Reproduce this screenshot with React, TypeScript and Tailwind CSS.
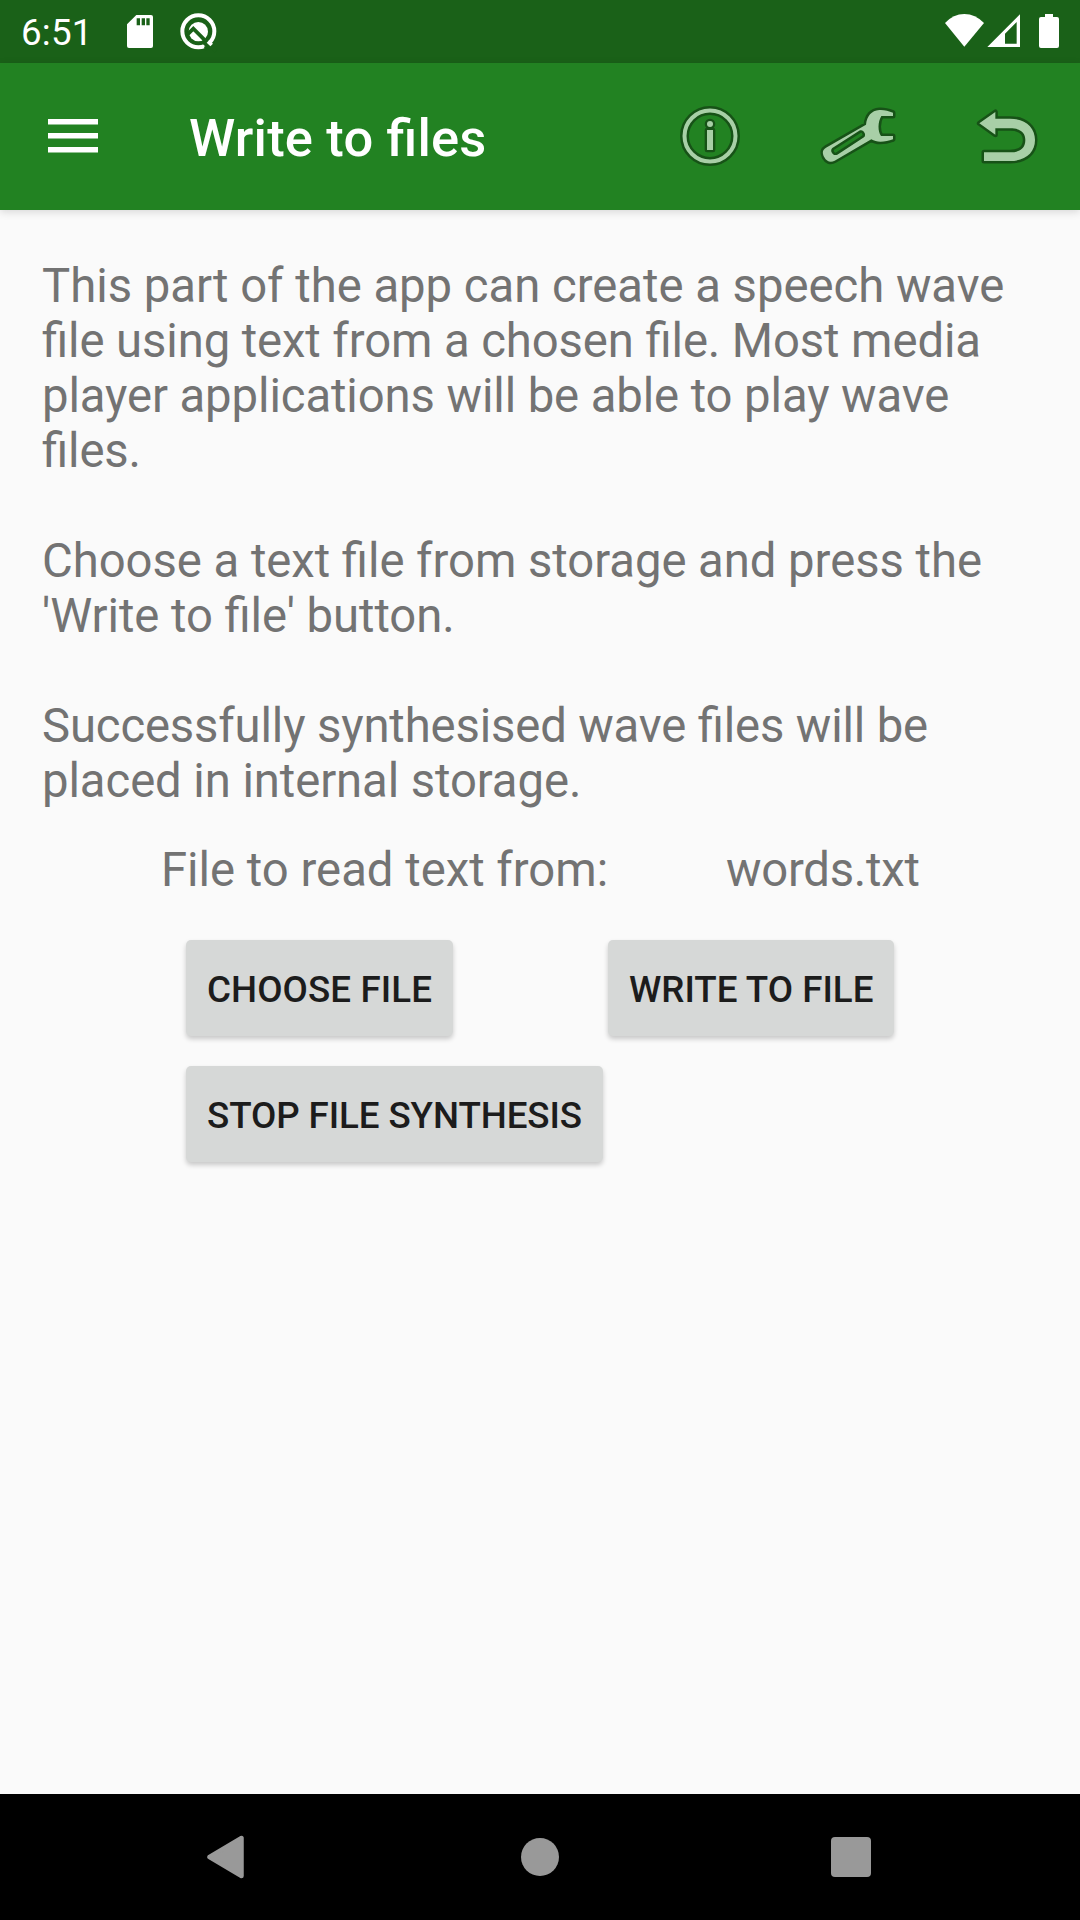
import React from 'react';

function StatusBar() {
  return (
    <div className="flex h-[63px] items-center bg-[#1a6118] text-white">
      <span className="ml-[21px] w-[100px] pt-[2px] text-[36.75px] leading-[63px] tracking-[0.2px]">6:51</span>
      <svg className="h-[63px] w-[120px]" viewBox="363 0 360 189" fill="none">
        <path
          d="M409 45H453Q459 45 459 51V138Q459 144 453 144H387Q381 144 381 138V73Z"
          fill="#fff"
        />
        <path d="M410 55h10v21h-10zM425 55h10v21h-10zM439 55h10v21h-10z" fill="#1a6118" />
        <circle cx="595" cy="94" r="48" stroke="#fff" strokeWidth="12" />
        <circle cx="595" cy="95" r="29" fill="#fff" />
        <path d="M562 104L580 86L648 154" stroke="#1a6118" strokeWidth="11" />
        <path d="M611 128L626 143M616 139L620 150" stroke="#1a6118" strokeWidth="9" />
        <path d="M624 124L635 135" stroke="#fff" strokeWidth="11" />
      </svg>
      <svg className="ml-auto h-[63px] w-[160px]" viewBox="0 0 480 189" fill="#fff">
        <path d="M75 69Q100 42 133 42Q166 42 192 69L133 140Z" />
        <path fillRule="evenodd" d="M202 141L300 43V141ZM255 101V131H290V66Z" />
        <path d="M375 42H399V51H411Q417 51 417 57V138Q417 144 411 144H363Q357 144 357 138V57Q357 51 363 51H375Z" />
      </svg>
    </div>
  );
}

function InfoIcon() {
  return (
    <svg className="h-[93px] w-[130px]" viewBox="0 0 390 279" fill="none">
      <circle cx="150" cy="138" r="76.5" stroke="#175217" strokeWidth="27" />
      <circle cx="150" cy="138" r="76.5" stroke="#a8cfa7" strokeWidth="12" />
      <g fill="#a8cfa7" stroke="#175217" strokeWidth="14" strokeLinejoin="round" paintOrder="stroke">
        <circle cx="150" cy="102" r="9" />
        <path d="M141 120H159V180H141Z" />
      </g>
    </svg>
  );
}

function WrenchIcon() {
  return (
    <svg className="h-[93px] w-[120px]" viewBox="0 0 360 279">
      <path
        fillRule="evenodd"
        fill="#a8cfa7"
        stroke="#175217"
        strokeWidth="15"
        strokeLinejoin="round"
        paintOrder="stroke"
        d="M279 68C266 63 252 59 238 60C214 62 201 78 198 104L78 173C66 180 67 190 73 202C80 215 92 219 104 212L214 148C232 160 258 155 279 148V138H243C233 124 233 96 244 78H279ZM180 121C190 117 201 134 192 142L112 194C101 200 87 184 97 174Z"
      />
    </svg>
  );
}

function BackIcon() {
  return (
    <svg className="h-[93px] w-[120px]" viewBox="0 0 360 279">
      <path
        fill="#a8cfa7"
        stroke="#175217"
        strokeWidth="15"
        strokeLinejoin="round"
        paintOrder="stroke"
        d="M58 100L106 66V86H150C196 86 225 112 225 150C225 188 196 213 150 213H72V187H150C180 187 196 175 196 150C196 126 180 115 150 115H106V134Z"
      />
    </svg>
  );
}

function AppBar() {
  return (
    <header className="relative flex h-[147px] items-center bg-[#228222] shadow-[0_2px_8px_rgba(0,0,0,0.14)]">
      <svg className="mb-[2px] ml-12 h-[34px] w-[50px]" viewBox="0 0 50 34" fill="#fff">
        <path d="M0 0h50v5.4H0zM0 14h50v5.4H0zM0 28h50v5.6H0z" />
      </svg>
      <h1 className="ml-[91px] pt-[2px] text-[52.5px] font-medium leading-[62px] tracking-[0.18px] text-white [font-feature-settings:'liga'_1]">
        Write to files
      </h1>
      <div className="ml-auto flex">
        <InfoIcon />
        <div className="ml-[10px] flex gap-10">
          <WrenchIcon />
          <BackIcon />
        </div>
      </div>
    </header>
  );
}

function Button({ className, children }: { className: string; children: React.ReactNode }) {
  return (
    <button
      className={`h-[96px] rounded-[5px] bg-[#d6d8d7] pl-[21px] pt-[2px] text-left text-[36.75px] font-medium leading-[43px] text-[#1c1c1c] shadow-[0_3px_5px_rgba(0,0,0,0.2)] ${className}`}
    >
      {children}
    </button>
  );
}

export default function App() {
  return (
    <div className="flex h-[1920px] w-[1080px] flex-col overflow-hidden bg-[#fafafa] font-['Roboto',sans-serif]">
      <StatusBar />
      <AppBar />
      <main className="flex-1 pt-[49px] text-[47.25px] leading-[55px] text-[#737373] [font-feature-settings:'liga'_1]">
        <div className="flex flex-col gap-[55px] whitespace-nowrap pl-[42px]">
          <p>
            <span className="tracking-[-0.02px]">This part of the app can create a speech wave</span>
            <br />
            <span className="tracking-[-0.1px]">file using text from a chosen file. Most media</span>
            <br />
            <span className="tracking-[-0.1px]">player applications will be able to play wave</span>
            <br />
            <span className="tracking-[-0.15px]">files.</span>
          </p>
          <p>
            <span className="tracking-[-0.04px]">Choose a text file from storage and press the</span>
            <br />
            <span className="tracking-[-0.06px]">'Write to file' button.</span>
          </p>
          <p>
            <span className="tracking-[-0.15px]">Successfully synthesised wave files will be</span>
            <br />
            <span className="tracking-[-0.08px]">placed in internal storage.</span>
          </p>
        </div>
        <div className="mt-[34px] flex whitespace-nowrap pl-[161px]">
          <span className="w-[565px]">File to read text from:</span>
          <span className="tracking-[-0.25px]">words.txt</span>
        </div>
        <div className="mt-[42px] grid grid-cols-[422px_auto] justify-start justify-items-start gap-y-[30px] whitespace-nowrap pl-[186px]">
          <Button className="w-[267px] tracking-[0.08px]">CHOOSE FILE</Button>
          <Button className="w-[286px]">WRITE TO FILE</Button>
          <Button className="w-[417px] tracking-[-0.1px]">STOP FILE SYNTHESIS</Button>
        </div>
      </main>
      <nav className="flex h-[126px] items-center bg-black">
        <svg className="ml-[206px] h-[44px] w-[39px]" viewBox="0 0 39 44">
          <path
            d="M3.5 22L35.5 3V41Z"
            fill="#999"
            stroke="#999"
            strokeWidth="4.5"
            strokeLinejoin="round"
          />
        </svg>
        <div className="ml-[276px] h-[38px] w-[38px] rounded-full bg-[#999]" />
        <div className="ml-[272px] h-10 w-10 rounded-[4px] bg-[#999]" />
      </nav>
    </div>
  );
}
